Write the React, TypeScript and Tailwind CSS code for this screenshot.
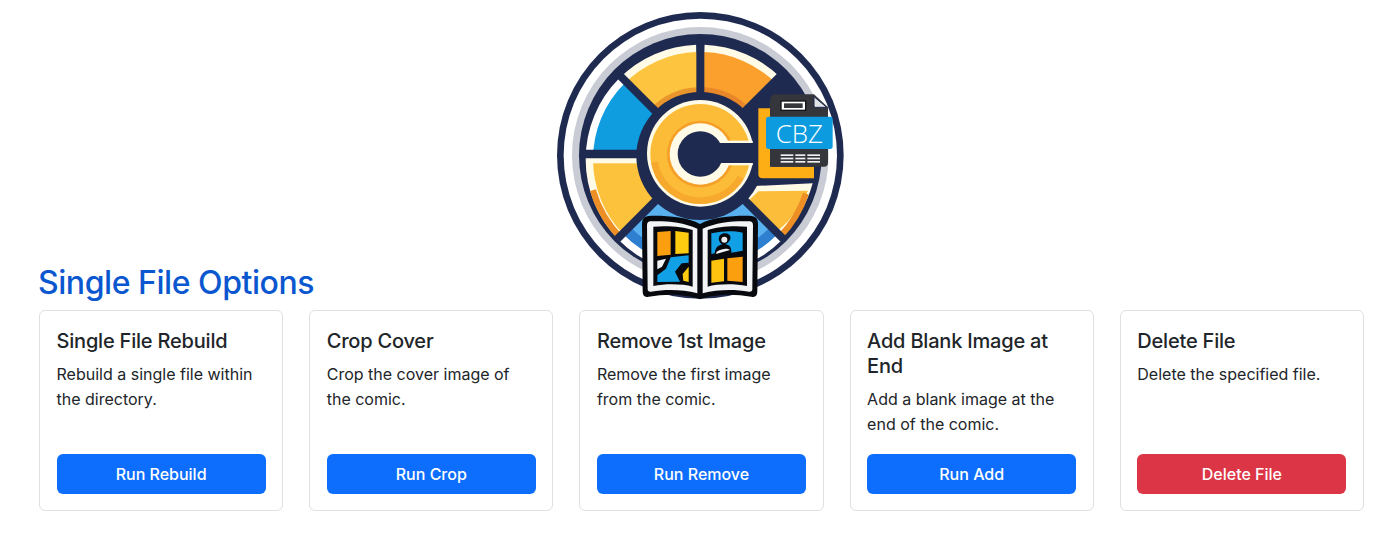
import React from "react";

const CX = 481;
const CY = 468;
const SY = 478;
const NAVY = "#1f2a50";

function sector(a0: number, a1: number, r0: number, r1: number, cx = CX, cy = CY) {
  const p = (a: number, r: number) => {
    const t = (a * Math.PI) / 180;
    return `${(cx + r * Math.cos(t)).toFixed(1)} ${(cy - r * Math.sin(t)).toFixed(1)}`;
  };
  const large = Math.abs(a1 - a0) > 180 ? 1 : 0;
  return `M${p(a0, r1)} A${r1} ${r1} 0 ${large} 0 ${p(a1, r1)} L${p(a1, r0)} A${r0} ${r0} 0 ${large} 1 ${p(a0, r0)} Z`;
}

function Segment({ a0, a1, main, dark, light = "#fffbe6" }: { a0: number; a1: number; main: string; dark: string; light?: string }) {
  return (
    <g>
      <path d={sector(a0, a1, 180, 344, CX, SY)} fill={light} />
      <path d={sector(a0, a1, 180, 322, CX, SY)} fill={main} />
      <path d={sector(a0, a1, 180, 206, CX, CY)} fill={dark} />
    </g>
  );
}

function Logo() {
  const dividers = [90, 45, 135, 225, 315];
  return (
    <svg viewBox="15 0 930 930" className="block w-[310px] h-[310px]">
      <circle cx={CX} cy={466} r={430} fill={NAVY} />
      <circle cx={CX} cy={466} r={410} fill="#ffffff" />
      <circle cx={CX} cy={466} r={385} fill="#c9ccd4" />
      <circle cx={CX} cy={466} r={364} fill={NAVY} />

      <Segment a0={92} a1={135} main="#fdc43f" dark="#e8962c" />
      <Segment a0={45} a1={88} main="#fb9f2d" dark="#e8862a" />
      <Segment a0={135} a1={180} main="#0f9de0" dark="#0f9de0" light="#ffffff" />
      <Segment a0={180} a1={225} main="#fdc23c" dark="#fdc23c" />
      <path d={sector(196, 225, 326, 344, CX, SY)} fill="#ee8f25" />
      <rect x={140} y={474} width={157} height={16} fill="#fffbe6" />

      <Segment a0={225} a1={315} main="#58b0ee" dark="#58b0ee" light="#ffffff" />
      <path d={sector(225, 315, 292, 322, CX, SY)} fill="#2f7fd0" />

      {/* lower right yellow segment */}
      <path d="M622 590 L642 558 L818 550 A344 344 0 0 1 724 708 L618 610 Z" fill="#fffbe6" />
      <path d="M632 596 L655 574 L804 572 A326 326 0 0 1 716 690 L622 608 Z" fill="#fcbd3a" />
      <path d={sector(316, 342, 324, 342, CX, SY)} fill="#ee8f25" />

      {dividers.map((a) => {
        const t = (a * Math.PI) / 180;
        return (
          <line
            key={a}
            x1={CX + 180 * Math.cos(t)}
            y1={CY - 180 * Math.sin(t)}
            x2={CX + 352 * Math.cos(t)}
            y2={CY - 352 * Math.sin(t)}
            stroke={NAVY}
            strokeWidth={24}
          />
        );
      })}
      <line x1={120} y1={462} x2={300} y2={462} stroke={NAVY} strokeWidth={26} />
      <circle cx={CX} cy={CY} r={192} fill={NAVY} />

      {/* Centre C */}
      <circle cx={CX} cy={460} r={160} fill="#fffbe6" />
      <circle cx={CX} cy={462} r={150} fill="#fcbc37" />
      <path d={sector(190, 330, 130, 150, CX, 462)} fill="#f7a92e" />
      <circle cx={CX} cy={462} r={100} fill="#f59f28" />
      <circle cx={CX} cy={462} r={92} fill="#fffbe6" />
      <circle cx={CX} cy={462} r={68} fill={NAVY} />
      <rect x={530} y={429} width={125} height={60} fill={NAVY} />
      <rect x={552} y={422} width={86} height={7} fill="#fffbe6" />
      <rect x={552} y={489} width={86} height={7} fill="#fffbe6" />

      {/* CBZ file */}
      <path d="M655 325 H690 V500 H822 V535 H668 Q655 535 655 522 Z" fill="#fcae14" />
      <path d="M708 283 H822 L864 322 V488 Q864 500 852 500 H702 Q690 500 690 488 V300 Q692 283 708 283 Z" fill="#34363b" />
      <path d="M822 290 L860 322 H826 Q822 322 822 316 Z" fill="#e2e3e5" stroke={NAVY} strokeWidth={3} />
      <rect x={723} y={303} width={74} height={28} fill="#ffffff" stroke="#111318" strokeWidth={4} />
      <rect x={732} y={310} width={56} height={14} fill="#34363b" />
      <rect x={678} y={350} width={200} height={97} rx={8} fill="#0d9be0" />
      <text x={778} y={428} textAnchor="middle" fill="#ffffff" fontSize={78} fontFamily="'Open Sans', sans-serif" fontWeight={300}>
        CBZ
      </text>
      <g fill="#f1f1f1">
        {[
          [722, 463],
          [722, 473],
          [722, 483],
        ].map(([x, y]) => (
          <g key={y}>
            <rect x={x} y={y} width={38} height={5} />
            <rect x={766} y={y} width={30} height={5} />
            <rect x={802} y={y} width={38} height={5} />
          </g>
        ))}
      </g>

      {/* Book */}
      <path d="M480 672 C440 650 370 646 325 648 Q306 650 306 670 L308 874 Q308 894 326 890 C380 880 440 882 480 898 C520 882 580 880 634 890 Q652 894 652 874 L654 670 Q654 650 635 648 C590 646 520 650 480 672 Z" fill="#07090e" />
      <path d="M472 686 C430 666 370 662 332 664 Q321 664 321 676 L323 868 Q323 876 333 875 C380 867 430 869 472 880 Z" fill="#f3f4f6" />
      <path d="M488 686 C530 666 590 662 628 664 Q639 664 639 676 L637 868 Q637 876 627 875 C580 867 530 869 488 880 Z" fill="#f3f4f6" />
      <path d="M340 680 C380 676 430 680 458 690 L458 860 C430 852 380 850 340 858 Z" fill="#07090e" />
      <path d="M621 680 C580 676 530 680 503 690 L503 860 C530 852 580 850 621 858 Z" fill="#07090e" />
      {/* left page panes */}
      <path d="M352 696 L392 693 L392 764 L352 768 Z" fill="#fc9f0e" />
      <path d="M406 693 L446 698 L446 760 L406 762 Z" fill="#fdcb0f" />
      <path d="M352 782 L378 776 L366 800 L352 808 Z" fill="#f3f4f6" />
      <path d="M352 826 L378 806 L392 772 L446 766 L446 788 L425 790 L405 815 L420 845 L352 846 Z" fill="#11a0e6" />
      <path d="M428 822 L446 800 L446 846 L430 842 Z" fill="#fdcb0f" />
      {/* right page panes */}
      <path d="M514 700 C550 692 580 692 608 698 L608 752 L574 758 C574 740 568 735 556 733 C580 720 575 698 552 700 C535 702 530 722 546 733 C530 738 526 745 524 760 L514 762 Z" fill="#11a0e6" />
      <circle cx={553} cy={719} r={9} fill="#e8e8ea" />
      <path d="M530 755 C550 744 562 745 570 750 L528 762 Z" fill="#f3f4f6" />
      <path d="M514 782 L552 776 L552 844 L514 848 Z" fill="#fdc30f" />
      <path d="M562 775 L608 770 L608 846 L562 842 Z" fill="#fc9f0e" />
    </svg>
  );
}

type Card = { title: string; desc: string; action: string; danger?: boolean };

const cards: Card[] = [
  { title: "Single File Rebuild", desc: "Rebuild a single file within the directory.", action: "Run Rebuild" },
  { title: "Crop Cover", desc: "Crop the cover image of the comic.", action: "Run Crop" },
  { title: "Remove 1st Image", desc: "Remove the first image from the comic.", action: "Run Remove" },
  { title: "Add Blank Image at End", desc: "Add a blank image at the end of the comic.", action: "Run Add" },
  { title: "Delete File", desc: "Delete the specified file.", action: "Delete File", danger: true },
];

export default function App() {
  return (
    <div className="h-[560px] bg-white overflow-hidden font-['Inter',sans-serif] text-[#212529]">
      <div className="flex justify-center -mb-[45px]">
        <Logo />
      </div>
      <div className="pr-[36px] pl-[39px]">
        <h2 className="text-[#0b57cf] text-[32px] leading-[36px] font-medium tracking-[-0.45px] h-[45px] -ml-px">Single File Options</h2>
        <div className="grid grid-cols-5 gap-[26px]">
          {cards.map((c) => (
            <div key={c.title} className="h-[201px] rounded-[6px] border border-[#dfe0e1] px-[16.5px] pt-[18px] pb-[16px] flex flex-col">
              <h5 className="text-[20px] leading-[25px] font-medium tracking-[-0.2px] mb-[8px]">{c.title}</h5>
              <p className="text-[16px] leading-[25px] text-[#212529]">{c.desc}</p>
              <button className={`mt-auto h-[40px] rounded-[6px] text-white text-[16px] font-medium ${c.danger ? "bg-[#dc3545]" : "bg-[#0d6efd]"}`}>
                {c.action}
              </button>
            </div>
          ))}
        </div>
      </div>
    </div>
  );
}
